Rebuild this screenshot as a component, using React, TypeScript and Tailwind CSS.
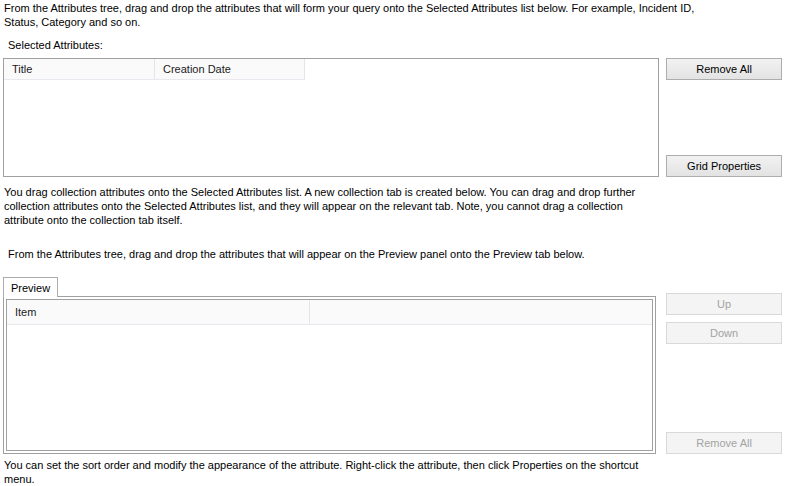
const font = { fontFamily: '"Liberation Sans", Arial, sans-serif' };

type BtnProps = {
  label: string;
  disabled?: boolean;
};

const Button = ({ label, disabled }: BtnProps) => {
  if (disabled) {
    return (
      <div className="flex h-[22px] items-center justify-center border border-[#d9d9d9] bg-[#f4f4f4] text-[#a3a3a3]">
        {label}
      </div>
    );
  }
  return (
    <div className="flex h-[22px] items-center justify-center border border-[#adadad] bg-gradient-to-b from-[#f2f2f2] to-[#e3e3e3] text-black">
      {label}
    </div>
  );
};

const HeaderCell = ({ label, width }: { label: string; width: string }) => (
  <div
    className={`flex h-full shrink-0 items-center border-r border-[#e5e5e5] pl-[8px] ${width}`}
  >
    {label}
  </div>
);

const App = () => {
  return (
    <div
      className="h-[486px] w-[789px] overflow-hidden bg-white text-[11px] leading-[14px] text-black"
      style={font}
    >
      <div className="pl-[4px] pr-[70px] pt-[1px]">
        From the Attributes tree, drag and drop the attributes that will form your query onto the
        Selected Attributes list below. For example, Incident ID, Status, Category and so on.
      </div>

      <div className="mt-[9px] pl-[8px]">Selected Attributes:</div>

      <div className="mt-[6px] flex pl-[3px] pr-[7px]">
        <div className="h-[119px] w-[657px] border border-[#a0a0a0] bg-white">
          <div className="flex h-[21px] w-[301px] border-b border-[#e8e8ee] bg-[#fafafa] text-[#1a1a1a]">
            <HeaderCell label="Title" width="w-[151px]" />
            <HeaderCell label="Creation Date" width="w-[150px]" />
          </div>
        </div>
        <div className="ml-[7px] flex w-[116px] flex-col justify-between">
          <Button label="Remove All" />
          <Button label="Grid Properties" />
        </div>
      </div>

      <div className="mt-[8px] pl-[4px] pr-[150px]">
        You drag collection attributes onto the Selected Attributes list. A new collection tab is
        created below. You can drag and drop further collection attributes onto the Selected
        Attributes list, and they will appear on the relevant tab. Note, you cannot drag a
        collection attribute onto the collection tab itself.
      </div>

      <div className="mt-[20px] pl-[8px]">
        From the Attributes tree, drag and drop the attributes that will appear on the Preview panel
        onto the Preview tab below.
      </div>

      <div className="mt-[16px] flex pl-[3px] pr-[7px]">
        <div className="flex w-[654px] flex-col">
          <div className="relative z-10 -mb-px flex h-[20px] w-[55px] items-center border border-b-0 border-[#acacac] bg-white pl-[7px]">
            Preview
          </div>
          <div className="h-[158px] border border-[#a0a0a0] bg-white p-[2px]">
            <div className="h-full border border-[#a0a0a0]">
              <div className="flex h-[25px] border-b border-[#e8e8ee] bg-[#fafafa] text-[#1a1a1a]">
                <HeaderCell label="Item" width="w-[303px]" />
              </div>
            </div>
          </div>
        </div>
        <div className="ml-[10px] flex w-[116px] flex-col pt-[16px]">
          <Button label="Up" disabled />
          <div className="mt-[7px]">
            <Button label="Down" disabled />
          </div>
          <div className="flex-1" />
          <Button label="Remove All" disabled />
        </div>
      </div>

      <div className="mt-[4px] pl-[4px] pr-[150px]">
        You can set the sort order and modify the appearance of the attribute. Right-click the
        attribute, then click Properties on the shortcut menu.
      </div>
    </div>
  );
};

export default App;
